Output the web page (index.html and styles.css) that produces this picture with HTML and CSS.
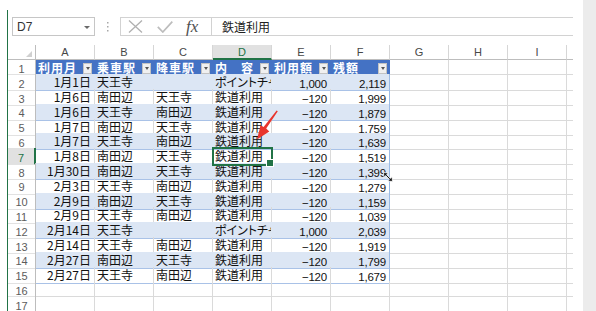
FILE: index.html
```html
<!DOCTYPE html>
<html lang="ja">
<head>
<meta charset="utf-8">
<title>利用履歴</title>
<link rel="stylesheet" href="styles.css">
</head>
<body>
<div class="app">
  <div class="window">
    <div class="fbar">
      <div class="namebox"><span>D7</span><span class="nb-arrow"></span></div>
      <div class="sep">
        <svg width="2" height="10" viewBox="0 0 2 10"><rect x="0" y="0" width="1.5" height="1.5"/><rect x="0" y="4" width="1.5" height="1.5"/><rect x="0" y="8" width="1.5" height="1.5"/></svg>
      </div>
      <div class="fbox">
        <div class="fbtns">
          <svg class="ic-x" width="15" height="13" viewBox="0 0 15 13"><path d="M1 0.5 L14 12.5 M14 0.5 L1 12.5"/></svg>
          <svg class="ic-ok" width="16" height="12" viewBox="0 0 16 12"><path d="M0.8 5.8 L5.8 11 L15.3 0.6"/></svg>
          <span class="fx">fx</span>
        </div>
        <div class="finput">鉄道利用</div>
      </div>
    </div>

    <div class="sheet">
      <div class="row head">
        <div class="corner"></div>
        <div class="ch">A</div><div class="ch">B</div><div class="ch">C</div><div class="ch sel">D</div><div class="ch">E</div><div class="ch">F</div><div class="ch">G</div><div class="ch">H</div><div class="ch">I</div><div class="ch edge"></div>
      </div>

      <div class="row t">
        <div class="rh">1</div>
        <div class="c tc th"><span>利用月</span><span class="dd"></span></div>
        <div class="c tc th"><span>乗車駅</span><span class="dd"></span></div>
        <div class="c tc th"><span>降車駅</span><span class="dd"></span></div>
        <div class="c tc th"><span>内　容</span><span class="dd"></span></div>
        <div class="c tc th"><span>利用額</span><span class="dd"></span></div>
        <div class="c tc th last"><span>残額</span><span class="dd"></span></div>
        <div class="c"></div><div class="c"></div><div class="c"></div><div class="c edge"></div>
      </div>

      <div class="row t band">
        <div class="rh">2</div>
        <div class="c tc r">1月1日</div><div class="c tc">天王寺</div><div class="c tc"></div><div class="c tc clip">ポイントチャージ</div><div class="c tc r num">1,000</div><div class="c tc r num last">2,119</div>
        <div class="c"></div><div class="c"></div><div class="c"></div><div class="c edge"></div>
      </div>
      <div class="row t">
        <div class="rh">3</div>
        <div class="c tc r">1月6日</div><div class="c tc">南田辺</div><div class="c tc">天王寺</div><div class="c tc">鉄道利用</div><div class="c tc r num">−120</div><div class="c tc r num last">1,999</div>
        <div class="c"></div><div class="c"></div><div class="c"></div><div class="c edge"></div>
      </div>
      <div class="row t band">
        <div class="rh">4</div>
        <div class="c tc r">1月6日</div><div class="c tc">天王寺</div><div class="c tc">南田辺</div><div class="c tc">鉄道利用</div><div class="c tc r num">−120</div><div class="c tc r num last">1,879</div>
        <div class="c"></div><div class="c"></div><div class="c"></div><div class="c edge"></div>
      </div>
      <div class="row t">
        <div class="rh">5</div>
        <div class="c tc r">1月7日</div><div class="c tc">南田辺</div><div class="c tc">天王寺</div><div class="c tc">鉄道利用</div><div class="c tc r num">−120</div><div class="c tc r num last">1,759</div>
        <div class="c"></div><div class="c"></div><div class="c"></div><div class="c edge"></div>
      </div>
      <div class="row t band">
        <div class="rh">6</div>
        <div class="c tc r">1月7日</div><div class="c tc">天王寺</div><div class="c tc">南田辺</div><div class="c tc">鉄道利用</div><div class="c tc r num">−120</div><div class="c tc r num last">1,639</div>
        <div class="c"></div><div class="c"></div><div class="c"></div><div class="c edge"></div>
      </div>
      <div class="row t">
        <div class="rh sel">7</div>
        <div class="c tc r">1月8日</div><div class="c tc">南田辺</div><div class="c tc">天王寺</div><div class="c tc active">鉄道利用</div><div class="c tc r num">−120</div><div class="c tc r num last">1,519</div>
        <div class="c"></div><div class="c"></div><div class="c"></div><div class="c edge"></div>
      </div>
      <div class="row t band">
        <div class="rh">8</div>
        <div class="c tc r">1月30日</div><div class="c tc">南田辺</div><div class="c tc">天王寺</div><div class="c tc">鉄道利用</div><div class="c tc r num">−120</div><div class="c tc r num last">1,399</div>
        <div class="c"></div><div class="c"></div><div class="c"></div><div class="c edge"></div>
      </div>
      <div class="row t">
        <div class="rh">9</div>
        <div class="c tc r">2月3日</div><div class="c tc">天王寺</div><div class="c tc">南田辺</div><div class="c tc">鉄道利用</div><div class="c tc r num">−120</div><div class="c tc r num last">1,279</div>
        <div class="c"></div><div class="c"></div><div class="c"></div><div class="c edge"></div>
      </div>
      <div class="row t band">
        <div class="rh">10</div>
        <div class="c tc r">2月9日</div><div class="c tc">南田辺</div><div class="c tc">天王寺</div><div class="c tc">鉄道利用</div><div class="c tc r num">−120</div><div class="c tc r num last">1,159</div>
        <div class="c"></div><div class="c"></div><div class="c"></div><div class="c edge"></div>
      </div>
      <div class="row t">
        <div class="rh">11</div>
        <div class="c tc r">2月9日</div><div class="c tc">天王寺</div><div class="c tc">南田辺</div><div class="c tc">鉄道利用</div><div class="c tc r num">−120</div><div class="c tc r num last">1,039</div>
        <div class="c"></div><div class="c"></div><div class="c"></div><div class="c edge"></div>
      </div>
      <div class="row t band">
        <div class="rh">12</div>
        <div class="c tc r">2月14日</div><div class="c tc">天王寺</div><div class="c tc"></div><div class="c tc clip">ポイントチャージ</div><div class="c tc r num">1,000</div><div class="c tc r num last">2,039</div>
        <div class="c"></div><div class="c"></div><div class="c"></div><div class="c edge"></div>
      </div>
      <div class="row t">
        <div class="rh">13</div>
        <div class="c tc r">2月14日</div><div class="c tc">天王寺</div><div class="c tc">南田辺</div><div class="c tc">鉄道利用</div><div class="c tc r num">−120</div><div class="c tc r num last">1,919</div>
        <div class="c"></div><div class="c"></div><div class="c"></div><div class="c edge"></div>
      </div>
      <div class="row t band">
        <div class="rh">14</div>
        <div class="c tc r">2月27日</div><div class="c tc">南田辺</div><div class="c tc">天王寺</div><div class="c tc">鉄道利用</div><div class="c tc r num">−120</div><div class="c tc r num last">1,799</div>
        <div class="c"></div><div class="c"></div><div class="c"></div><div class="c edge"></div>
      </div>
      <div class="row t">
        <div class="rh">15</div>
        <div class="c tc r">2月27日</div><div class="c tc">天王寺</div><div class="c tc">南田辺</div><div class="c tc">鉄道利用</div><div class="c tc r num">−120</div><div class="c tc r num last">1,679</div>
        <div class="c"></div><div class="c"></div><div class="c"></div><div class="c edge"></div>
      </div>
      <div class="row">
        <div class="rh">16</div>
        <div class="c"></div><div class="c"></div><div class="c"></div><div class="c"></div><div class="c"></div><div class="c"></div><div class="c"></div><div class="c"></div><div class="c"></div><div class="c edge"></div>
      </div>
      <div class="row">
        <div class="rh">17</div>
        <div class="c"></div><div class="c"></div><div class="c"></div><div class="c"></div><div class="c"></div><div class="c"></div><div class="c"></div><div class="c"></div><div class="c"></div><div class="c edge"></div>
      </div>
    </div>
  </div>
  <div class="gap"></div>
  <div class="side"></div>

  <svg class="overlay" width="596" height="311" viewBox="0 0 596 311">
    <polygon class="arrow" points="277.8,111.2 266.2,128.6 269.3,131.6 257,139.5 260.6,125.2 263.6,127 276.6,110.4"/>
    <path class="cursor" d="M383.5 172.5 L388.3 173 L386.6 174.6 L390.4 178.4 L392 176.7 L392.5 181.5 L387.7 181 L389.4 179.4 L385.6 175.6 L384 177.3 Z"/>
  </svg>
</div>
</body>
</html>
```

FILE: styles.css
```css
* {
  box-sizing: border-box;
}

html,
body {
  margin: 0;
  padding: 0;
  background: #ffffff;
}

body {
  width: 596px;
  height: 311px;
  overflow: hidden;
  font-family: "Noto Sans CJK JP", "Noto Sans", sans-serif;
  font-size: 12px;
  color: #111111;
}

.app {
  position: relative;
  display: flex;
  height: 311px;
  padding-left: 7px;
}

.window {
  width: 566px;
  height: 301px;
  margin-top: 10px;
  padding-top: 7px;
  border-left: 1px solid #217346;
  overflow: hidden;
}

.gap {
  width: 10px;
}

.side {
  width: 13px;
  background: #ececec;
}

/* ---------- formula bar ---------- */
.fbar {
  display: flex;
  align-items: center;
  height: 19px;
  padding-left: 4px;
  margin-bottom: 9px;
}

.namebox {
  width: 83px;
  height: 19px;
  border: 1px solid #c6c6c6;
  display: flex;
  align-items: center;
  justify-content: space-between;
  padding: 0 4px 0 4px;
  font-family: "Liberation Sans", Arial, sans-serif;
  font-size: 12px;
  color: #333333;
}

.nb-arrow {
  width: 0;
  height: 0;
  border-left: 3px solid transparent;
  border-right: 3px solid transparent;
  border-top: 3px solid #6a6a6a;
  margin-top: 1px;
}

.sep {
  width: 25px;
  display: flex;
  justify-content: center;
}

.sep svg {
  fill: #a8a8a8;
}

.fbox {
  flex: 1;
  height: 19px;
  display: flex;
  border: 1px solid #d2d2d2;
  border-right: none;
}

.fbtns {
  width: 91px;
  display: flex;
  align-items: center;
  border-right: 1px solid #d2d2d2;
}

.ic-x {
  margin-left: 7px;
  fill: none;
  stroke: #b0b0b0;
  stroke-width: 1.3;
}

.ic-ok {
  margin-left: 14px;
  fill: none;
  stroke: #bdbdbd;
  stroke-width: 1.7;
}

.fx {
  margin-left: 13px;
  font-family: "Liberation Serif", "Times New Roman", serif;
  font-style: italic;
  font-size: 17px;
  line-height: 17px;
  color: #505050;
}

.finput {
  padding-left: 10px;
  font-size: 12px;
  line-height: 17px;
  color: #222222;
}

/* ---------- sheet ---------- */
.row {
  display: grid;
  grid-template-columns: 28px repeat(9, 59px) 6px;
  height: 14.8px;
}

.row.head {
  height: 14.5px;
}

.corner {
  display: flex;
  justify-content: flex-end;
  align-items: flex-end;
  padding: 0 3px 2px 0;
  border-right: 1px solid #bdbdbd;
  border-bottom: 1px solid #bdbdbd;
}

.corner::after {
  content: "";
  width: 0;
  height: 0;
  border-left: 6px solid transparent;
  border-bottom: 6px solid #d0d0d0;
}

.ch {
  text-align: center;
  font-family: "Liberation Sans", Arial, sans-serif;
  font-size: 11px;
  line-height: 12px;
  padding-top: 1px;
  color: #474747;
  border-right: 1px solid #d6d6d6;
  border-bottom: 1px solid #bdbdbd;
}

.ch.sel {
  background: #e1e1e1;
  color: #217346;
  border-bottom: 2px solid #217346;
}

.ch.edge {
  border-right: none;
}

.rh {
  text-align: center;
  font-family: "Liberation Sans", Arial, sans-serif;
  font-size: 11px;
  line-height: 10px;
  padding-top: 4.5px;
  color: #5c5c5c;
  border-right: 1px solid #bdbdbd;
  border-bottom: 1px solid #e2e2e2;
}

.rh.sel {
  background: #e1e1e1;
  color: #217346;
  border-right: 2px solid #217346;
}

.c {
  border-right: 1px solid #dadada;
  border-bottom: 1px solid #dadada;
  padding: 2px 3px 0 2px;
  line-height: 12px;
  white-space: nowrap;
}

.c.edge {
  border-right: none;
}

.r {
  text-align: right;
}

.num {
  font-family: "Liberation Sans", Arial, sans-serif;
  font-size: 11.5px;
  letter-spacing: -0.2px;
  padding-top: 4px;
}

.clip {
  overflow-x: clip;
  font-feature-settings: "palt";
}

/* table cells */
.tc {
  border-bottom-color: #a9c2e7;
}

.tc.last {
  border-right-color: #9bbbe5;
}

.band .tc {
  background: #dce6f4;
  border-right-color: #dce6f4;
}

.band .tc.last {
  border-right-color: #9bbbe5;
}

.c.th {
  display: flex;
  justify-content: space-between;
  align-items: flex-start;
  padding-right: 2px;
  background: #4472c4;
  border-right-color: #4472c4;
  border-bottom-color: #4472c4;
  color: #ffffff;
  font-weight: 700;
  letter-spacing: 1px;
}

.dd {
  width: 9px;
  height: 11px;
  margin-top: 1px;
  background: #f0f0f0;
  border: 1px solid #c3c3c3;
  display: flex;
  align-items: center;
  justify-content: center;
}

.dd::before {
  content: "";
  width: 0;
  height: 0;
  border-left: 2.5px solid transparent;
  border-right: 2.5px solid transparent;
  border-top: 3px solid #555555;
}

.active {
  position: relative;
  outline: 2px solid #217346;
  outline-offset: -1px;
}

.active::after {
  content: "";
  position: absolute;
  right: -3px;
  bottom: -3px;
  width: 6px;
  height: 6px;
  background: #217346;
  border: 1px solid #ffffff;
}

/* ---------- annotation overlay ---------- */
.overlay {
  position: absolute;
  left: 0;
  top: 0;
  pointer-events: none;
}

.arrow {
  fill: #e8352d;
}

.cursor {
  fill: #111111;
  stroke: #ffffff;
  stroke-width: 0.8;
}
```
